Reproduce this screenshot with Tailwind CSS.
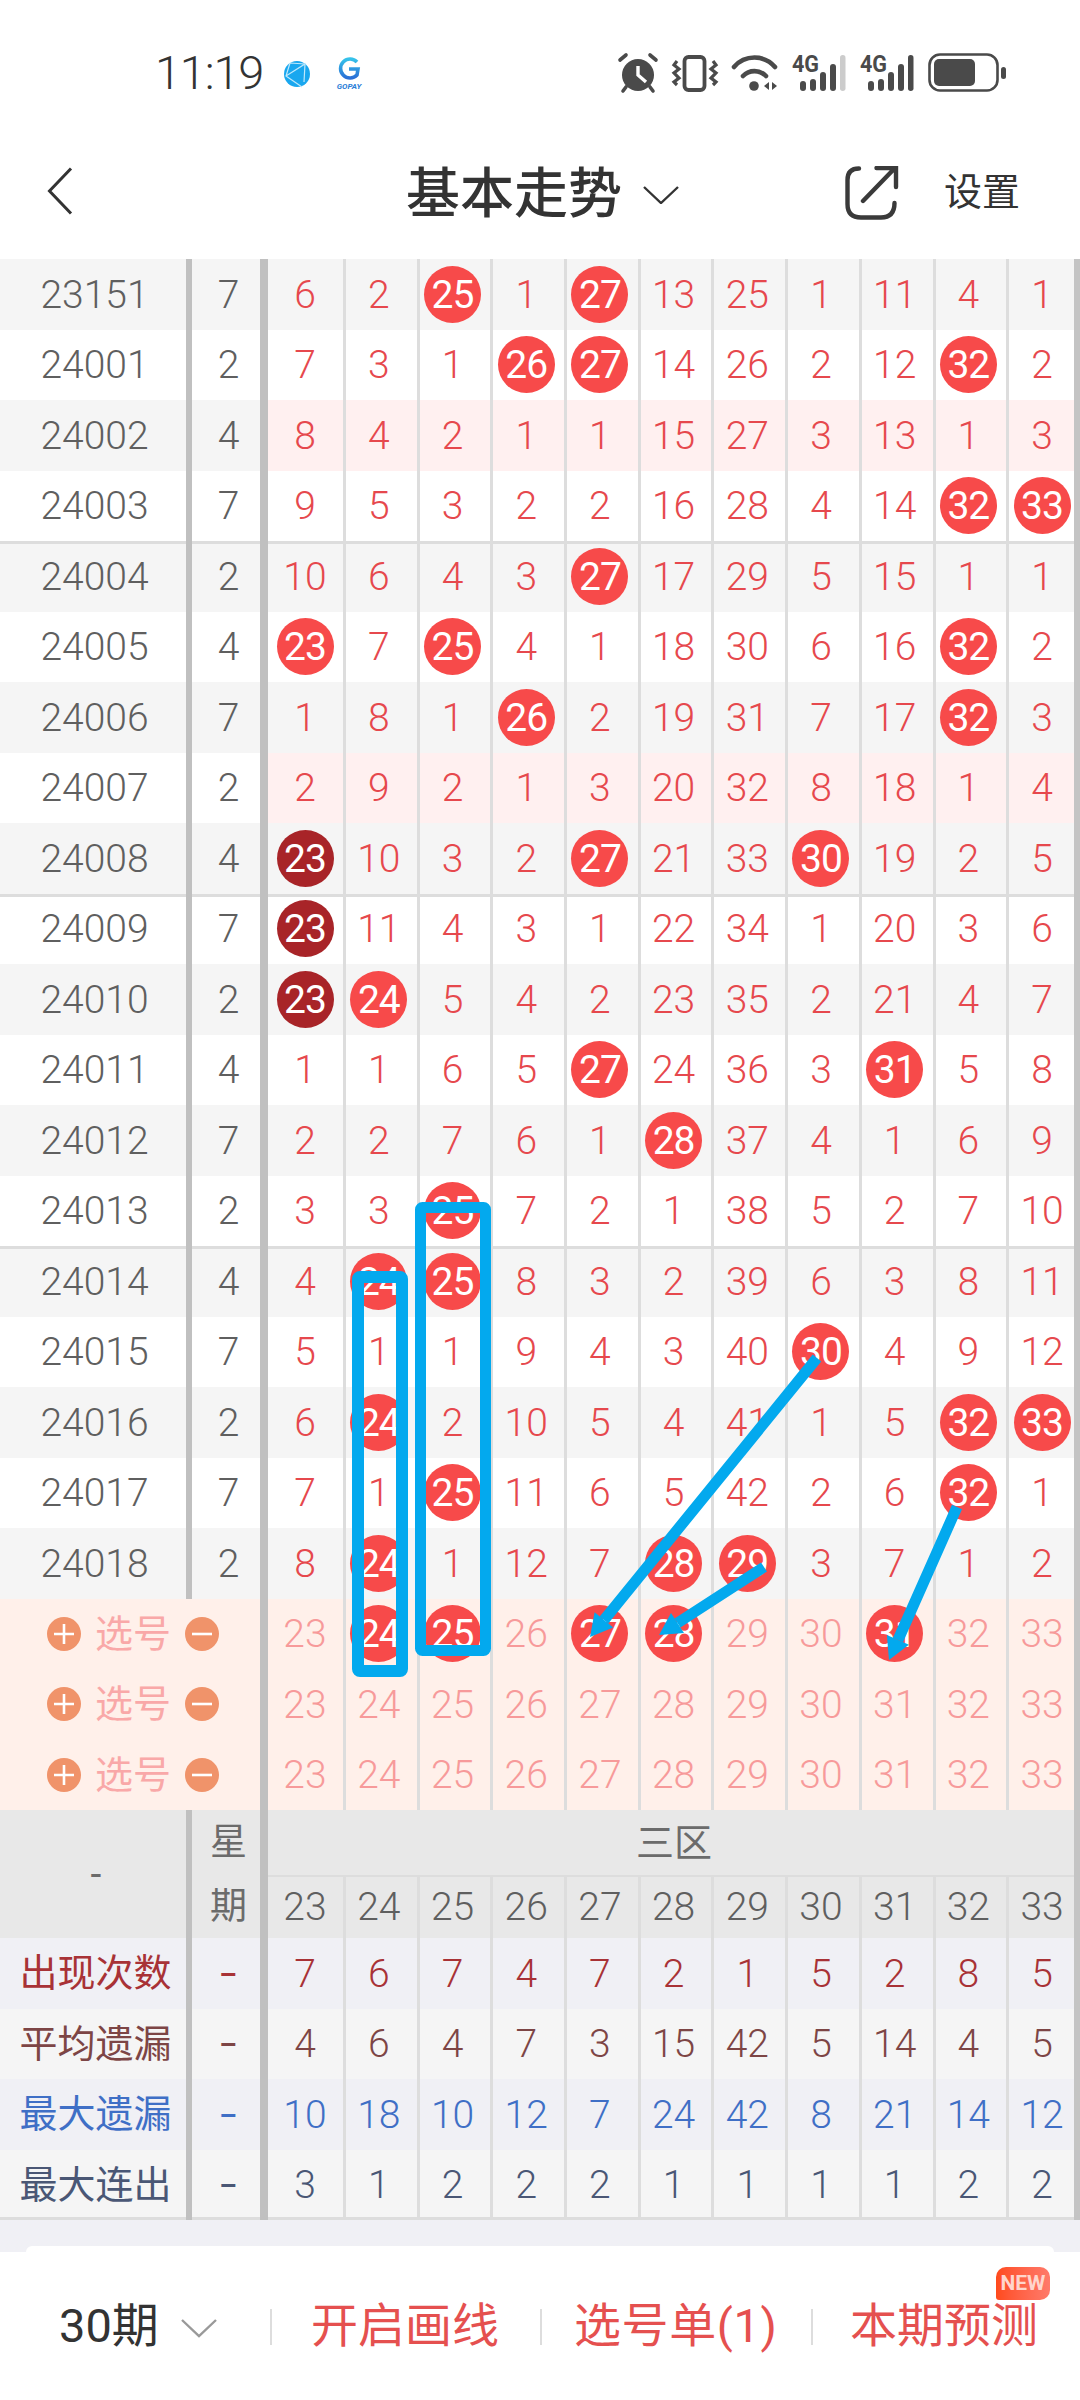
<!DOCTYPE html>
<html lang="zh">
<head>
<meta charset="utf-8">
<title>基本走势</title>
<script src="https://cdn.jsdelivr.net/npm/@tailwindcss/browser@4"></script>
</head>
<body class="bg-white [font-family:Roboto,'Noto_Sans_CJK_SC',sans-serif] text-[39px] leading-none">
<div class="relative w-[1080px] h-[2400px] overflow-hidden bg-white">

  <!-- status bar -->
  <div class="h-[120px] pt-[40px] pl-[155px] flex items-start">
    <span class="w-[115px] shrink-0 leading-[66px] text-[47px] font-[350] tracking-[-1.2px] text-[#333333]">11:19</span>
    <svg class="w-[110px] h-[60px] shrink-0" viewBox="270 40 110 60">
      <circle cx="297" cy="74" r="13" fill="#19a7ef"/>
      <path d="M290 63 L286 76 L302 87 M286 76 L305 64 L304 82 M290 63 L305 64" fill="none" stroke="#bfe8fb" stroke-width="1.2"/>
      <defs><linearGradient id="gp" x1="0" y1="0" x2="0" y2="1"><stop offset="0" stop-color="#35c2ea"/><stop offset="1" stop-color="#2a6fd6"/></linearGradient></defs>
      <path d="M357 62 A9.5 9.5 0 1 0 357 75 L358 69 L349 69" fill="none" stroke="url(#gp)" stroke-width="3.6"/>
      <text x="349" y="89" text-anchor="middle" font-size="8" font-weight="700" font-style="italic" fill="#2a7ed8" font-family="Roboto">GOPAY</text>
    </svg>
    <svg class="w-[420px] h-[70px] ml-[220px] shrink-0" viewBox="600 40 420 70">
      <g fill="#4a4a4a" stroke="#4a4a4a">
        <circle cx="638" cy="75" r="16" stroke="none"/>
        <path d="M620 60 L626 55 M650 55 L656 60 M626 87 L623 91 M650 87 L653 91" fill="none" stroke-width="3.6" stroke-linecap="round"/>
        <path d="M638 66 V75 L646 82" fill="none" stroke="#ffffff" stroke-width="3.4"/>
        <rect x="684.5" y="57" width="20" height="33" rx="4" fill="none" stroke-width="3.8"/>
        <path d="M677 61 L674 65 L679 69 L674 73 L679 78 L674 82 L677 85 M713 61 L716 65 L711 69 L716 73 L711 78 L716 82 L713 85" fill="none" stroke-width="3.2"/>
        <path d="M734 67 A27 27 0 0 1 775 67" fill="none" stroke-width="4.6" stroke-linecap="round"/>
        <path d="M743 76 A16 16 0 0 1 766 76" fill="none" stroke-width="4.6" stroke-linecap="round"/>
        <circle cx="754" cy="86" r="4.8" stroke="none"/>
        <path d="M769 82 V90 L764 86 Z M772 82 V90 L777 86 Z" stroke="none"/>
        <g stroke="none">
          <rect x="800" y="81" width="6" height="10" rx="3"/><rect x="810" y="79" width="6" height="12" rx="3"/><rect x="820" y="72" width="6" height="19" rx="3"/><rect x="830" y="64" width="6" height="27" rx="3"/><rect x="840" y="55" width="5.5" height="36" rx="2.7" fill="#cccccc"/>
          <rect x="868" y="81" width="6" height="10" rx="3"/><rect x="878" y="79" width="6" height="12" rx="3"/><rect x="888" y="72" width="6" height="19" rx="3"/><rect x="898" y="64" width="6" height="27" rx="3"/><rect x="908" y="55" width="5.5" height="36" rx="2.7"/>
          <text x="792" y="72" font-size="23" font-weight="700" font-family="Roboto" textLength="27" lengthAdjust="spacingAndGlyphs">4G</text>
          <text x="860" y="72" font-size="23" font-weight="700" font-family="Roboto" textLength="27" lengthAdjust="spacingAndGlyphs">4G</text>
        </g>
        <rect x="929.5" y="54.5" width="68" height="36" rx="10.5" fill="none" stroke-width="2.6"/>
        <rect x="934" y="59" width="41" height="27" rx="5" stroke="none"/>
        <rect x="1001" y="67" width="5" height="12" rx="2.5" stroke="none"/>
      </g>
    </svg>
  </div>

  <!-- title bar -->
  <div class="h-[139px] pl-[47px] flex items-center">
    <svg class="mt-[2px] w-[26px] h-[48px] shrink-0" viewBox="0 0 26 48"><path d="M24 1.5 L2.5 24 L24 46.5" fill="none" stroke="#333333" stroke-width="3"/></svg>
    <span class="ml-[333px] w-[215px] shrink-0 text-[54px] font-medium text-[#333333] whitespace-nowrap [font-family:'Noto_Sans_CJK_SC',sans-serif]">基本走势</span>
    <svg class="ml-[22px] mt-[10px] w-[36px] h-[18px] shrink-0" viewBox="0 0 36 18"><path d="M1 1 L18 17 L35 1" fill="none" stroke="#333333" stroke-width="2.4"/></svg>
    <svg class="ml-[166px] mt-[6px] w-[54px] h-[54px] shrink-0" viewBox="844 166 54 54"><path d="M858 168.5 C851 168.5 846.5 172 846.5 180 V204 C846.5 213 851 217.5 860 217.5 H880 C889 217.5 893.5 213 893.5 203" fill="none" stroke="#3a3a3a" stroke-width="4.4" stroke-linecap="round"/><path d="M862 201 L893 169 M875.5 168 H895 V187" fill="none" stroke="#3a3a3a" stroke-width="4.4" stroke-linecap="round"/></svg>
    <span class="ml-[45px] mt-[5px] text-[38px] text-[#333333] whitespace-nowrap">设置</span>
  </div>

  <!-- table -->
  <div id="rows"></div>

  <!-- footer gap -->
  <div class="h-[26px] bg-[#f0f0f5]"></div>
  <div class="h-[6px] bg-[#f0f0f5]"><div class="h-[6px] mx-[26px] bg-white rounded-t-[12px]"></div></div>

  <!-- bottom bar -->
  <div class="relative h-[149px] bg-white flex items-center pl-[59px]">
    <span class="mb-[2px] w-[98px] shrink-0 text-[47px] text-[#333333] whitespace-nowrap">30期</span>
    <svg class="ml-[24px] mt-[4px] w-[36px] h-[19px] shrink-0" viewBox="0 0 36 19"><path d="M1 1 L18 17 L35 1" fill="none" stroke="#999999" stroke-width="2.4"/></svg>
    <div class="ml-[53px] w-[2px] h-[36px] bg-[#dddddd] shrink-0"></div>
    <span class="mb-[3px] ml-[39px] w-[188px] shrink-0 text-[47px] text-[#e5504f] whitespace-nowrap">开启画线</span>
    <div class="ml-[41px] w-[2px] h-[36px] bg-[#dddddd] shrink-0"></div>
    <span class="mb-[3px] ml-[32px] w-[202px] shrink-0 text-[47px] tracking-[0.6px] text-[#e5504f] whitespace-nowrap">选号单(1)</span>
    <div class="ml-[35px] w-[2px] h-[36px] bg-[#dddddd] shrink-0"></div>
    <span class="mb-[3px] ml-[37px] w-[188px] shrink-0 text-[47px] text-[#e5504f] whitespace-nowrap">本期预测</span>
    <div class="absolute left-[996px] top-[15px] w-[54px] h-[33px] rounded-[10px] rounded-bl-[3px] bg-linear-to-r from-[#ff4a1a] to-[#ff7a6a] flex items-center justify-center text-[21px] font-bold text-[#ffd5cc]">NEW</div>
  </div>

  <!-- right edge bar of the table -->
  <div class="absolute left-[1074px] top-[259px] w-[6px] h-[1961px] bg-[#c4c4c4]"></div>

  <!-- hand drawn marks -->
  <svg class="absolute left-0 top-0 w-[1080px] h-[2400px] pointer-events-none" viewBox="0 0 1080 2400">
    <g fill="none" stroke="#03a9ee">
      <rect x="358" y="1277" width="44" height="394" rx="2" stroke-width="12"/>
      <rect x="420.5" y="1207.5" width="65" height="443" rx="2" stroke-width="11"/>
      <path d="M817 1358 L604 1620 M764 1567 L677.5 1623 M957 1507 L898 1640" stroke-width="11"/>
    </g>
    <g fill="#03a9ee">
      <polygon points="590,1637 613.2,1627.5 594.6,1612.3"/>
      <polygon points="659,1635 684,1633 671,1613"/>
      <polygon points="889,1660 908.9,1644.8 886.9,1635"/>
    </g>
  </svg>
</div>

<script>
const ROW = "relative grid grid-cols-[186px_6px_68px_8px_75px_repeat(10,73.7px)] h-[70.5px] items-stretch";
const SELROW = "relative grid grid-cols-[260px_8px_75px_repeat(10,73.7px)] h-[70.5px] items-stretch bg-[#fff0ea]";
const BAR = "bg-[#c0c0c0]";
const FIRST = "flex items-center justify-center pr-[1px]";
const CELL = "flex items-center justify-center pr-[5px] border-l-[3px] border-[#dddddd]";
const BALL = "w-[57px] h-[57px] pt-[2px] rounded-full flex items-center justify-center text-white font-normal tracking-[-1px] shrink-0";
const NUM = "pt-[2px] font-[350]";
const RED = "bg-[#f74a4a]";
const DARK = "bg-[#a82428]";
const cell = (i, extra, html) => `<div class="${i ? CELL : FIRST} ${extra}">${html}</div>`;

const data = [
 ["23151",7,"6 2 *25 1 *27 13 25 1 11 4 1"],
 ["24001",2,"7 3 1 *26 *27 14 26 2 12 *32 2"],
 ["24002",4,"8 4 2 1 1 15 27 3 13 1 3"],
 ["24003",7,"9 5 3 2 2 16 28 4 14 *32 *33"],
 ["24004",2,"10 6 4 3 *27 17 29 5 15 1 1"],
 ["24005",4,"*23 7 *25 4 1 18 30 6 16 *32 2"],
 ["24006",7,"1 8 1 *26 2 19 31 7 17 *32 3"],
 ["24007",2,"2 9 2 1 3 20 32 8 18 1 4"],
 ["24008",4,"#23 10 3 2 *27 21 33 *30 19 2 5"],
 ["24009",7,"#23 11 4 3 1 22 34 1 20 3 6"],
 ["24010",2,"#23 *24 5 4 2 23 35 2 21 4 7"],
 ["24011",4,"1 1 6 5 *27 24 36 3 *31 5 8"],
 ["24012",7,"2 2 7 6 1 *28 37 4 1 6 9"],
 ["24013",2,"3 3 *25 7 2 1 38 5 2 7 10"],
 ["24014",4,"4 *24 *25 8 3 2 39 6 3 8 11"],
 ["24015",7,"5 1 1 9 4 3 40 *30 4 9 12"],
 ["24016",2,"6 *24 2 10 5 4 41 1 5 *32 *33"],
 ["24017",7,"7 1 *25 11 6 5 42 2 6 *32 1"],
 ["24018",2,"8 *24 1 12 7 *28 *29 3 7 1 2"]
];

const ball = (v, tone) => v[0] === "*" ? `<span class="${BALL} ${RED}">${v.slice(1)}</span>`
                        : v[0] === "#" ? `<span class="${BALL} ${DARK}">${v.slice(1)}</span>`
                        : `<span class="${NUM} ${tone}">${v}</span>`;

let out = "";
data.forEach((d, r) => {
  const stripe = r % 2 === 0 ? "bg-[#f5f5f5]" : "bg-white";
  const group = (r === 4 || r === 9 || r === 14) ? "shadow-[inset_0_3px_0_#dddddd]" : "";
  const pink = (r === 2 || r === 7) ? "bg-[#fff0f0]" : "";
  out += `<div class="${ROW} ${stripe} ${group}">
    <div class="flex items-center justify-center pl-[3px] pt-[2px] font-[350] text-[#5f5f5f]">${d[0]}</div>
    <div class="${BAR}"></div>
    <div class="flex items-center justify-center pl-[5px] pt-[2px] font-[350] text-[#5f5f5f]">${d[1]}</div>
    <div class="${BAR}"></div>
    ${d[2].split(" ").map((v, i) => cell(i, pink, ball(v, "text-[#e6484d]"))).join("")}
  </div>`;
});

const circ = (minus) => `<svg class="w-[34px] h-[34px] shrink-0" viewBox="0 0 34 34"><circle cx="17" cy="17" r="17" fill="#f0936a"/><path d="${minus ? "M7 17 H27" : "M7 17 H27 M17 7 V27"}" stroke="#ffffff" stroke-width="2.6"/></svg>`;
["23 *24 *25 26 *27 *28 29 30 *31 32 33",
 "23 24 25 26 27 28 29 30 31 32 33",
 "23 24 25 26 27 28 29 30 31 32 33"].forEach(s => {
  out += `<div class="${SELROW}">
    <div class="flex items-center pl-[47px]">${circ(false)}<span class="ml-[14px] w-[76px] shrink-0 text-[38px] text-[#f9a8a8] whitespace-nowrap">选号</span><span class="ml-[14px]"></span>${circ(true)}</div>
    <div class="${BAR}"></div>
    ${s.split(" ").map((v, i) => cell(i, "", ball(v, "text-[#f79a9a]"))).join("")}
  </div>`;
});

/* header */
const nums = "23 24 25 26 27 28 29 30 31 32 33".split(" ");
out += `<div class="grid grid-cols-[186px_6px_68px_8px_1fr] h-[128px] bg-[#e8e8e8]">
  <div class="flex items-center justify-center pl-[6px] text-[#6b6b6b]">-</div>
  <div class="${BAR}"></div>
  <div class="flex flex-col items-center pl-[5px] text-[37px] text-[#6b6b6b]">
    <span class="h-[65px] flex items-center">星</span>
    <span class="h-[63px] flex items-center">期</span>
  </div>
  <div class="${BAR}"></div>
  <div class="flex flex-col text-[#5f5f5f]">
    <div class="h-[65px] flex items-center justify-center text-[38px] text-[#6b6b6b]">三区</div>
    <div class="h-[63px] grid grid-cols-[75px_repeat(10,73.7px)] shadow-[inset_0_2px_0_#dddddd]">
      ${nums.map((v, i) => cell(i, "", `<span class="pt-[1px] font-[350]">${v}</span>`)).join("")}
    </div>
  </div>
</div>`;

/* statistics */
const DASH = "inline-block scale-x-150";
[["出现次数","text-[#a83236]","bg-[#f0f0f5]","7 6 7 4 7 2 1 5 2 8 5",""],
 ["平均遗漏","text-[#7d4545]","bg-[#f5f5f5]","4 6 4 7 3 15 42 5 14 4 5",""],
 ["最大遗漏","text-[#3f6fc6]","bg-[#f0f0f5]","10 18 10 12 7 24 42 8 21 14 12",""],
 ["最大连出","text-[#4a5775]","bg-[#f5f5f5]","3 1 2 2 2 1 1 1 1 2 2","shadow-[inset_0_-3px_0_#dddddd]"]
].forEach(s => {
  out += `<div class="${ROW} ${s[2]} ${s[1]} ${s[4]}">
    <div class="flex items-center justify-center pl-[5px] text-[38px] whitespace-nowrap">${s[0]}</div>
    <div class="${BAR}"></div>
    <div class="flex items-center justify-center pl-[5px]"><span class="${DASH}">-</span></div>
    <div class="${BAR}"></div>
    ${s[3].split(" ").map((v, i) => cell(i, "", `<span class="${NUM}">${v}</span>`)).join("")}
  </div>`;
});
document.getElementById("rows").innerHTML = out;
</script>
</body>
</html>
